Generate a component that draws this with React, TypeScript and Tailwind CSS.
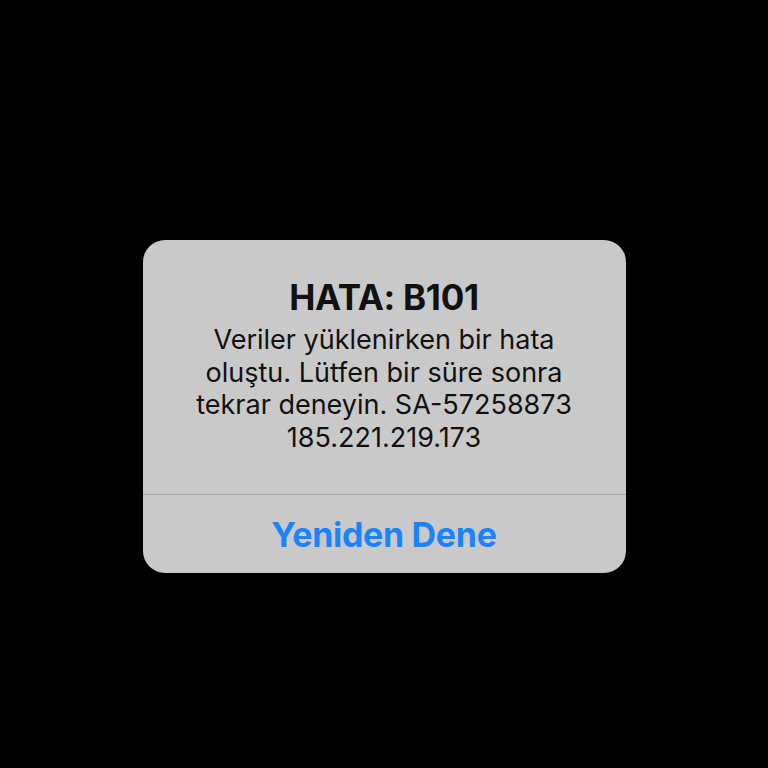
export default function App() {
  return (
    <div
      className="w-[768px] h-[768px] bg-black flex items-center justify-center"
      style={{ fontFamily: 'Inter, "Noto Sans", sans-serif' }}
    >
      <div className="w-[483px] mt-[45px] bg-[#c9c9c9] rounded-[22px] overflow-hidden flex flex-col">
        <div className="pt-[37px] pb-[40px] flex flex-col items-center text-center text-[#111]">
          <h1 className="text-[35px] leading-[40px] font-bold tracking-[-0.3px]">HATA: B101</h1>
          <p className="mt-[7px] text-[27px] leading-[32.5px] whitespace-nowrap">
            Veriler yüklenirken bir hata
            <br />
            oluştu. Lütfen bir süre sonra
            <br />
            tekrar deneyin. SA-57258873
            <br />
            185.221.219.173
          </p>
        </div>
        <div className="h-px bg-[#a6a6a6]" />
        <button className="h-[78px] text-[34px] font-bold text-[#1a84ff] tracking-[-0.3px]">
          Yeniden Dene
        </button>
      </div>
    </div>
  );
}
